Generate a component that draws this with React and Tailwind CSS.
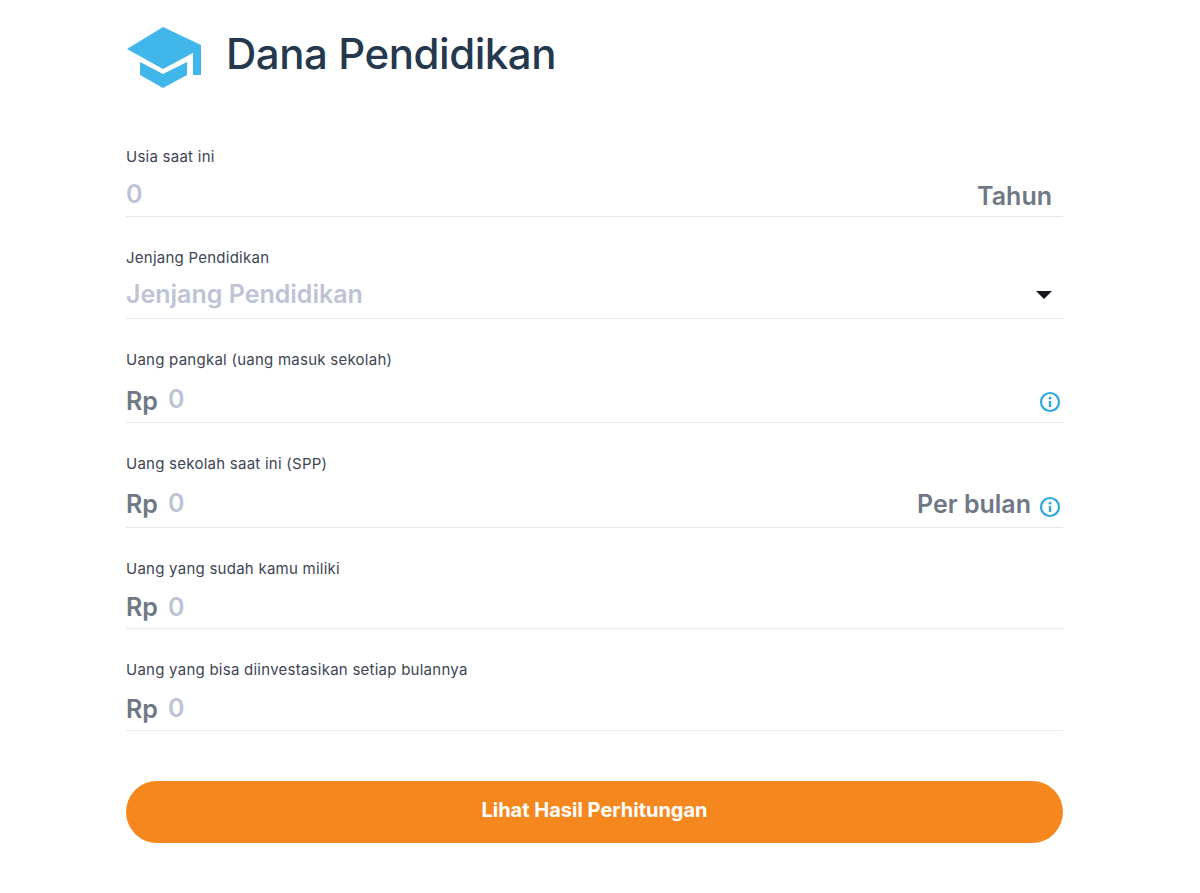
import React from 'react';

const InfoIcon = ({ className }) => (
  <svg width="22" height="22" viewBox="0 0 22 22" fill="none" className={`mr-[2px] shrink-0 ${className}`}>
    <circle cx="11" cy="11" r="9" stroke="#2fa9dc" strokeWidth="2.2" />
    <rect x="9.8" y="10" width="2.4" height="6" fill="#2fa9dc" />
    <circle cx="11" cy="7.2" r="1.4" fill="#2fa9dc" />
  </svg>
);

const Field = ({ label, prefix, placeholder = '0', right, rightClass = 'mr-[11px]', info, caret, rowClass, valueClass = '' }) => (
  <div>
    <label className="block h-5 text-[15px] leading-5 tracking-[0.25px] text-[#3c4654]">{label}</label>
    <div className={`flex items-end border-b border-[#e6e8ec] ${rowClass}`}>
      {prefix && <span className="mr-[10px] text-[25px] font-semibold leading-[30px] text-[#6f7885]">{prefix}</span>}
      <span className={`flex-1 text-[25px] font-semibold leading-[30px] text-[#bcc4d6] ${valueClass}`}>{placeholder}</span>
      {right && <span className={`text-[25px] font-semibold leading-[30px] text-[#6f7885] ${rightClass}`}>{right}</span>}
      {caret && <span className="mb-[10px] mr-[11px] h-0 w-0 border-x-[8px] border-t-[8px] border-x-transparent border-t-[#14171c]" />}
      {info}
    </div>
  </div>
);

export default function App() {
  return (
    <div className="min-h-[893px] bg-white font-['Inter',sans-serif]">
      <div className="ml-[126px] w-[937px] pt-[26px]">
        <div className="flex items-center">
          <svg width="76" height="63" viewBox="0 0 76 63">
            <path d="M37 1 L75 19 V49 H67 V27 L37 43 L1 23 Z" fill="#41b6ea" />
            <path d="M14 36 L37 48 L61 36 V49 L37 62 L14 49 Z" fill="#41b6ea" />
          </svg>
          <h1 className="mb-2 ml-6 text-[42px] font-medium leading-none tracking-[-0.45px] text-[#24384e]">Dana Pendidikan</h1>
        </div>

        <div className="mt-[58px] flex flex-col gap-[31px]">
          <Field label="Usia saat ini" right="Tahun" rowClass="h-[50px] pb-[5px]" valueClass="mb-[2px]" />
          <Field label="Jenjang Pendidikan" placeholder="Jenjang Pendidikan" caret rowClass="h-[51px] pb-[9px]" />
          <Field label="Uang pangkal (uang masuk sekolah)" prefix="Rp" info={<InfoIcon className="mb-[3px]" />} rowClass="h-[53px] pb-[6px]" valueClass="mb-[2px]" />
          <Field label="Uang sekolah saat ini (SPP)" prefix="Rp" right="Per bulan" rightClass="mr-[8px]" info={<InfoIcon className="mb-[1px]" />} rowClass="h-[54px] pb-[8px]" valueClass="mb-[1px]" />
          <Field label="Uang yang sudah kamu miliki" prefix="Rp" rowClass="h-[50px] pb-[6px]" />
          <Field label="Uang yang bisa diinvestasikan setiap bulannya" prefix="Rp" rowClass="h-[51px] pb-[6px]" valueClass="mb-[1px]" />
        </div>

        <button className="mt-[50px] h-[62px] w-full rounded-full bg-[#f5871f] pb-1 text-[20px] font-bold text-white">
          Lihat Hasil Perhitungan
        </button>
      </div>
    </div>
  );
}
